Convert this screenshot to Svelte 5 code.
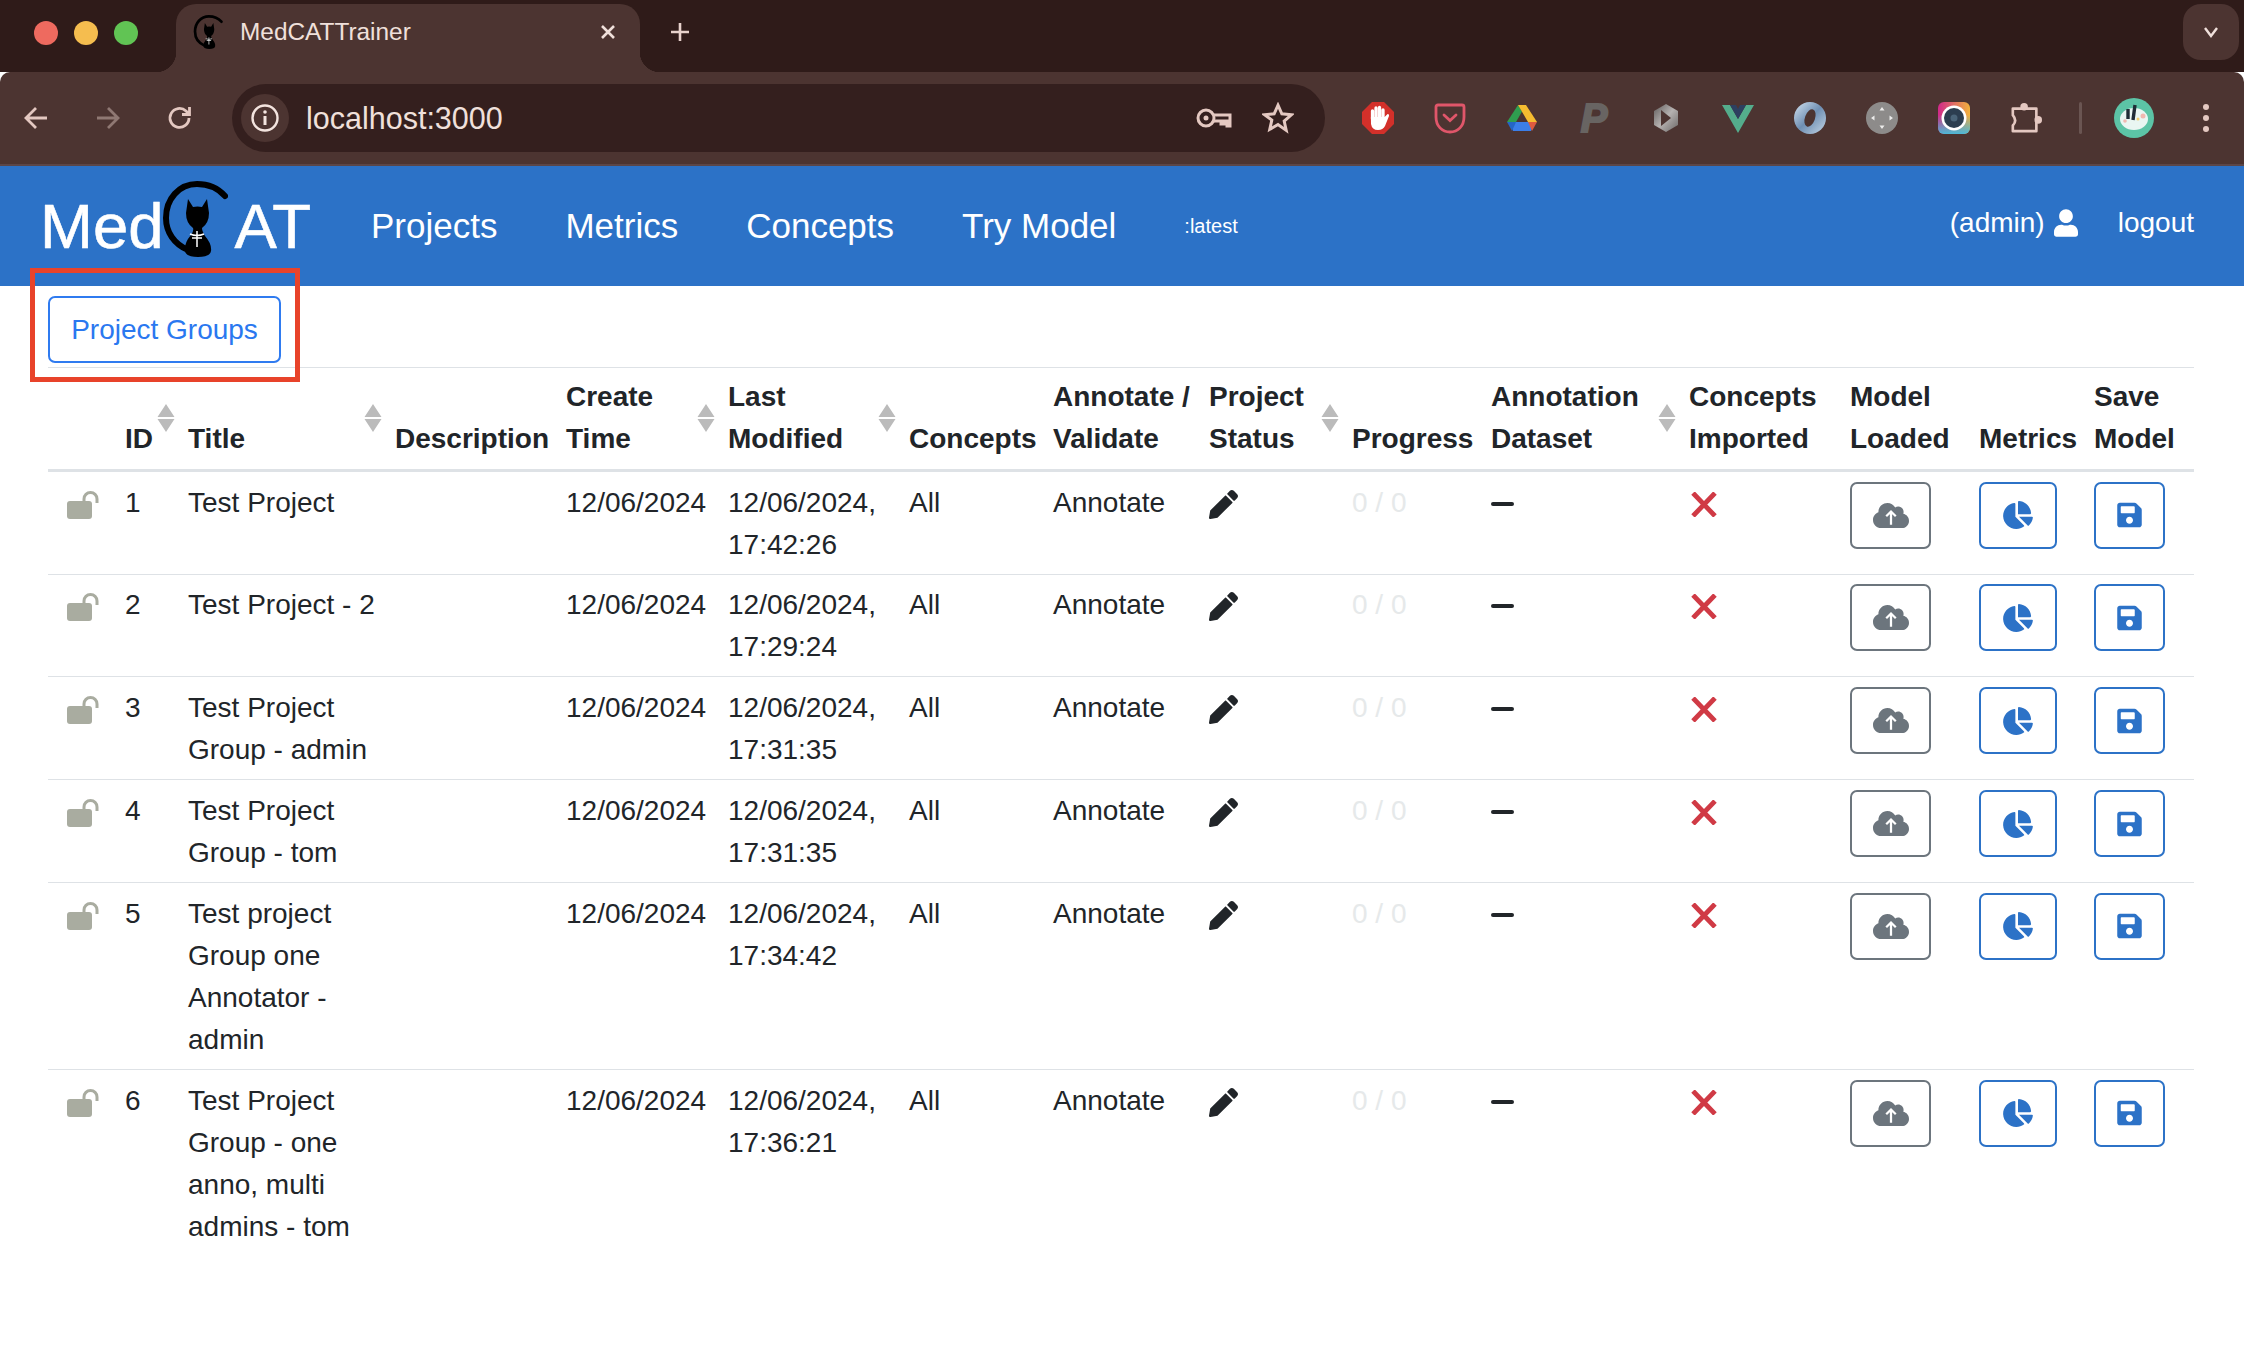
<script>
	const extensions = ['block', 'pocket', 'drive', 'p', 'plex', 'vue', 'ring', 'dpad', 'cam', 'puzzle'];

	const columns = [
		{ label: '' },
		{ label: 'ID', sort: true },
		{ label: 'Title', sort: true },
		{ label: 'Description' },
		{ label: 'Create Time', sort: true },
		{ label: 'Last Modified', sort: true },
		{ label: 'Concepts' },
		{ label: 'Annotate / Validate' },
		{ label: 'Project Status', sort: true },
		{ label: 'Progress' },
		{ label: 'Annotation Dataset', sort: true },
		{ label: 'Concepts Imported' },
		{ label: 'Model Loaded' },
		{ label: 'Metrics' },
		{ label: 'Save Model' }
	];
	const widths = [68, 63, 207, 171, 162, 181, 144, 156, 143, 139, 198, 161, 129, 115, 109];

	const projects = [
		{ id: 1, title: 'Test Project', modified: '17:42:26' },
		{ id: 2, title: 'Test Project - 2', modified: '17:29:24' },
		{ id: 3, title: 'Test Project Group - admin', modified: '17:31:35' },
		{ id: 4, title: 'Test Project Group - tom', modified: '17:31:35' },
		{ id: 5, title: 'Test project Group one Annotator - admin', modified: '17:34:42' },
		{ id: 6, title: 'Test Project Group - one anno, multi admins - tom', modified: '17:36:21' }
	];
</script>

{#snippet cat(cls)}
	<svg class={cls} viewBox="0 0 66 76">
		<path d="M63 15C55 6 44 3 35 3 17 3 4 18 4 37c0 14 8 26 22 32" fill="none" stroke="#000" stroke-width="6" stroke-linecap="round" />
		<path d="M26 18l5 8q4.500-1 9 0l5-8 2 14q0 10-7 15 0 3 3 8 7 8 6 15-1 6-13 6t-13-6q-1-8 6-16 3-4 2-7-7-5-7-15z" fill="#000" />
		<path d="M28 53q7 3 14 0M30 57h10M35 50v16" fill="none" stroke="#fff" stroke-width="1.500" />
	</svg>
{/snippet}

{#snippet extension(name)}
	{#if name === 'block'}
		<svg class="ext" viewBox="0 0 32 32">
			<path d="M10 0h12l10 10v12L22 32H10L0 22V10z" fill="#d3302a" />
			<path d="M10.500 17V9M14 15V6M17.500 15V5.500M21 16V8" stroke="#fff" stroke-width="3.300" stroke-linecap="round" />
			<path d="M8.900 15h13.700l3-3q2 0 1.400 2L23 24q-2 4-7 4-6 0-7-6z" fill="#fff" />
		</svg>
	{:else if name === 'pocket'}
		<svg class="ext" viewBox="0 0 32 32">
			<path d="M4 3h24q2 0 2 2v10c0 9-6 15-14 15S2 24 2 15V5q0-2 2-2z" fill="none" stroke="#e0566a" stroke-width="2.800" />
			<path d="M10 13l6 5.500 6-5.500" fill="none" stroke="#e0566a" stroke-width="2.800" stroke-linecap="round" />
		</svg>
	{:else if name === 'drive'}
		<svg class="ext" viewBox="0 0 32 32">
			<path d="M12 3l4 6.500L10 20H1z" fill="#2f9e4f" />
			<path d="M12 3h8l11 17h-9z" fill="#f5bc30" />
			<path d="M7 20h18l3 1-3 8H7l-2-8z" fill="#3b7ee8" />
			<path d="M1 20h9l-4 9z" fill="#2566c5" />
			<path d="M22 20h9l-5 9z" fill="#dd5a40" />
		</svg>
	{:else if name === 'p'}
		<span class="ext-p">P</span>
	{:else if name === 'plex'}
		<svg class="ext" viewBox="0 0 32 32">
			<defs>
				<linearGradient id="plexFill" x1="0" y1="0" x2="1" y2="1">
					<stop offset="0" stop-color="#5f5b5a" />
					<stop offset="0.500" stop-color="#b5b1b0" />
					<stop offset="1" stop-color="#6a6665" />
				</linearGradient>
			</defs>
			<path d="M16 2l12 7v14l-12 7-12-7V9z" fill="url(#plexFill)" />
			<path d="M11 8l10 8-10 8z" fill="#4c3431" />
		</svg>
	{:else if name === 'vue'}
		<svg class="ext" viewBox="0 0 32 32">
			<path d="M0 3h8l8 14 8-14h8L16 31z" fill="#54ad8c" />
			<path d="M8 3h6l2 4 2-4h6l-8 14z" fill="#2d4060" />
		</svg>
	{:else if name === 'ring'}
		<svg class="ext" viewBox="0 0 32 32">
			<defs>
				<linearGradient id="ringFill" x1="0" y1="0" x2="1" y2="1">
					<stop offset="0" stop-color="#d5e4f2" />
					<stop offset="0.500" stop-color="#6f8fb3" />
					<stop offset="1" stop-color="#c4d6e6" />
				</linearGradient>
			</defs>
			<circle cx="16" cy="16" r="16" fill="url(#ringFill)" />
			<ellipse cx="16" cy="16" rx="5" ry="9" transform="rotate(20 16 16)" fill="#4c3431" />
		</svg>
	{:else if name === 'dpad'}
		<svg class="ext" viewBox="0 0 32 32">
			<circle cx="16" cy="16" r="16" fill="#8d8b8a" />
			<path d="M16 5l2.500 3.500h-5zM16 27l-2.500-3.500h5zM5 16l3.500-2.500v5zM27 16l-3.500 2.500v-5z" fill="#ecebea" />
		</svg>
	{:else if name === 'cam'}
		<svg class="ext" viewBox="0 0 32 32">
			<defs>
				<linearGradient id="camTop" x1="0" y1="0" x2="1" y2="0">
					<stop offset="0" stop-color="#d0288a" />
					<stop offset="1" stop-color="#f2b33c" />
				</linearGradient>
				<linearGradient id="camBottom" x1="0" y1="0" x2="0" y2="1">
					<stop offset="0.400" stop-color="#3fb8d8" stop-opacity="0" />
					<stop offset="1" stop-color="#4db8d8" />
				</linearGradient>
			</defs>
			<rect width="32" height="32" rx="6" fill="url(#camTop)" />
			<rect width="32" height="32" rx="6" fill="url(#camBottom)" />
			<circle cx="16" cy="16" r="12.500" fill="#fff" />
			<circle cx="16" cy="16" r="10" fill="#2c3e50" />
			<circle cx="16" cy="16" r="3.500" fill="#4a6478" />
		</svg>
	{:else if name === 'puzzle'}
		<svg class="ext" viewBox="0 0 34 32">
			<path d="M3 6h25v24H3v-6q5-5 0-11z" fill="none" stroke="#e4c8c1" stroke-width="2.800" stroke-linejoin="round" />
			<circle cx="15" cy="4" r="4" fill="#e4c8c1" />
			<circle cx="30" cy="18" r="4" fill="#e4c8c1" />
		</svg>
	{/if}
{/snippet}

<div class="tabstrip">
	<div class="lights">
		<span class="red"></span>
		<span class="yellow"></span>
		<span class="green"></span>
	</div>
	<div class="tab">
		{@render cat('favicon')}
		<span class="tab-title">MedCATTrainer</span>
		<svg class="tab-close" viewBox="0 0 16 16"><path d="M2 2l12 12M14 2L2 14" stroke="#f0e0db" stroke-width="2.600" /></svg>
	</div>
	<svg class="new-tab" viewBox="0 0 20 20"><path d="M10 1v18M1 10h18" stroke="#e8d2cc" stroke-width="2.600" /></svg>
	<div class="tab-menu">
		<svg viewBox="0 0 16 12"><path d="M2 2l6 8 6-8" fill="none" stroke="#f0e0db" stroke-width="2.400" /></svg>
	</div>
</div>

<div class="toolbar">
	<div class="tool">
		<svg viewBox="0 0 26 26"><path d="M24 13H3M13 3L3 13l10 10" fill="none" stroke="#e4c8c1" stroke-width="2.800" /></svg>
	</div>
	<div class="tool">
		<svg viewBox="0 0 26 26"><path d="M2 13h21M13 3l10 10-10 10" fill="none" stroke="#8f7873" stroke-width="2.800" /></svg>
	</div>
	<div class="tool">
		<svg viewBox="0 0 26 26"><path d="M22 13a9.500 9.500 0 1 1-3-7l3 3M22.500 2v7.500H15" fill="none" stroke="#e4c8c1" stroke-width="2.800" /></svg>
	</div>
	<div class="address">
		<span class="info">
			<svg viewBox="0 0 28 28">
				<circle cx="14" cy="14" r="12.500" fill="none" stroke="#f3e4df" stroke-width="2.400" />
				<path d="M14 12v9" stroke="#f3e4df" stroke-width="3" />
				<circle cx="14" cy="8" r="1.800" fill="#f3e4df" />
			</svg>
		</span>
		<span class="url">localhost:3000</span>
		<span class="addr-icon key">
			<svg viewBox="0 0 36 22">
				<circle cx="10" cy="11" r="8" fill="none" stroke="#e4c8c1" stroke-width="3" />
				<circle cx="10" cy="11" r="2.500" fill="#e4c8c1" />
				<path d="M18 8h16v11h-3v-5h-3v3h-3v-3h-7" fill="none" stroke="#e4c8c1" stroke-width="3" />
			</svg>
		</span>
		<span class="addr-icon">
			<svg viewBox="0 0 30 30"><path d="M15 3l3.600 8.100 8.900.9-6.700 5.900 1.900 8.700L15 21.100l-7.700 4.500 1.900-8.700L2.500 12l8.900-.9z" fill="none" stroke="#e4c8c1" stroke-width="2.800" /></svg>
		</span>
	</div>
	<div class="extensions">
		{#each extensions as name}
			<div class="slot">{@render extension(name)}</div>
		{/each}
	</div>
	<span class="divider"></span>
	<div class="avatar-slot">
		<svg viewBox="0 0 40 40">
			<circle cx="20" cy="20" r="20" fill="#5cc4a6" />
			<ellipse cx="20" cy="21" rx="14" ry="11" fill="#e9f6f2" />
			<path d="M14 11v10M21 7l-2 15" stroke="#1f2c36" stroke-width="3.400" />
			<circle cx="29" cy="18" r="2.500" fill="#f0b8b0" />
			<circle cx="24" cy="21" r="1.500" fill="#f2d070" />
			<circle cx="11" cy="23" r="1.800" fill="#f0b8b0" />
		</svg>
	</div>
	<div class="dots"><span></span><span></span><span></span></div>
</div>

<header class="navbar">
	<div class="logo">
		<span>Med</span>
		{@render cat('logo-cat')}
		<span class="logo-end">AT</span>
	</div>
	<nav>
		<a href="#projects">Projects</a>
		<a href="#metrics">Metrics</a>
		<a href="#concepts">Concepts</a>
		<a href="#model">Try Model</a>
		<span class="version">:latest</span>
	</nav>
	<div class="account">
		<span>(admin)</span>
		<svg class="user" viewBox="0 0 448 512"><path d="M224 256c70.700 0 128-57.300 128-128S294.700 0 224 0 96 57.300 96 128s57.300 128 128 128zm89.600 32h-16.700c-22.200 10.200-46.900 16-72.900 16s-50.600-5.800-72.900-16h-16.700C60.200 288 0 348.200 0 422.400V464c0 26.500 21.500 48 48 48h352c26.500 0 48-21.500 48-48v-41.600c0-74.200-60.200-134.400-134.400-134.400z" fill="#fff" /></svg>
		<span class="logout">logout</span>
	</div>
</header>

<main>
	<button class="groups">Project Groups</button>
	<!-- annotation drawn over the screenshot -->
	<div class="callout"></div>

	<table>
		<colgroup>
			{#each widths as w}
				<col style="width: {w}px" />
			{/each}
		</colgroup>
		<thead>
			<tr>
				{#each columns as col}
					<th>
						{col.label}
						{#if col.sort}
							<svg class="sort" viewBox="0 0 18 28">
								<path d="M9 0l8.500 13H.5zM9 28L.5 15h17z" fill="#bbb" />
							</svg>
						{/if}
					</th>
				{/each}
			</tr>
		</thead>
		<tbody>
			{#each projects as p}
				<tr>
					<td>
						<svg class="lock" viewBox="0 0 32 28">
							<rect y="10" width="25" height="18" rx="3" fill="#a9aca0" />
							<path d="M17 11V8a6.500 6.500 0 0 1 13 0v4" fill="none" stroke="#a9aca0" stroke-width="3" />
						</svg>
					</td>
					<td>{p.id}</td>
					<td>{p.title}</td>
					<td></td>
					<td>12/06/2024</td>
					<td>12/06/2024, {p.modified}</td>
					<td>All</td>
					<td>Annotate</td>
					<td>
						<svg class="pencil" viewBox="0 0 512 512"><path d="M497.900 142.100l-46.100 46.100c-4.700 4.700-12.300 4.700-17 0l-111-111c-4.700-4.700-4.700-12.300 0-17l46.100-46.100c18.700-18.700 49.100-18.700 67.900 0l60.100 60.100c18.800 18.700 18.800 49.100 0 67.900zM284.200 99.800L21.600 362.400.4 483.900c-2.900 16.400 11.400 30.600 27.800 27.800l121.500-21.300 262.600-262.600c4.700-4.700 4.700-12.300 0-17l-111-111c-4.800-4.700-12.400-4.700-17.100 0z" fill="#212529" /></svg>
					</td>
					<td class="progress">0 / 0</td>
					<td><span class="dash"></span></td>
					<td>
						<svg class="cross" viewBox="0 0 26 25"><path d="M2 1l22 23M24 1L2 24" stroke="#d03a45" stroke-width="4.800" /></svg>
					</td>
					<td>
						<button class="icon-btn load">
							<svg width="36" height="29" viewBox="0 0 640 512">
								<path d="M537.600 226.600c4.100-10.700 6.400-22.400 6.400-34.600 0-53-43-96-96-96-19.700 0-38.100 6-53.300 16.200C367 64.200 315.300 32 256 32c-88.400 0-160 71.600-160 160 0 2.700.1 5.400.2 8.100C40.200 219.800 0 273.200 0 336c0 79.500 64.500 144 144 144h368c70.700 0 128-57.300 128-128 0-61.900-44-113.600-102.400-125.400z" fill="#6c757d" />
								<path d="M320 420V190M235 270l85-85 85 85" fill="none" stroke="#fff" stroke-width="40" />
							</svg>
						</button>
					</td>
					<td>
						<button class="icon-btn primary metrics">
							<svg width="30" height="28" viewBox="0 0 544 512"><path d="M527.790 288H290.500l158.030 158.030c6.040 6.040 15.980 6.530 22.190.68 38.700-36.460 65.320-85.610 73.130-140.860 1.340-9.460-6.510-17.850-16.060-17.850zm-15.830-64.800C503.720 103.740 408.260 8.280 288.800.04 279.680-.59 272 7.100 272 16.240V240h223.770c9.140 0 16.820-7.680 16.190-16.800zM224 288V50.710c0-9.550-8.390-17.400-17.840-16.060C86.990 51.490-4.100 155.600.14 280.370 4.500 408.510 114.830 513.590 243.030 511.980c50.400-.63 96.970-16.870 135.260-44.030 7.900-5.600 8.420-17.230 1.570-24.080L224 288z" fill="#2c72c7" /></svg>
						</button>
					</td>
					<td>
						<button class="icon-btn primary save">
							<svg width="25" height="28" viewBox="0 0 448 512"><path d="M433.941 129.941l-83.882-83.882A48 48 0 0 0 316.118 32H48C21.490 32 0 53.490 0 80v352c0 26.510 21.490 48 48 48h352c26.510 0 48-21.490 48-48V163.882a48 48 0 0 0-14.059-33.941zM224 416c-35.346 0-64-28.654-64-64 0-35.346 28.654-64 64-64s64 28.654 64 64c0 35.346-28.654 64-64 64zm96-304.520V212c0 6.627-5.373 12-12 12H76c-6.627 0-12-5.373-12-12V108c0-6.627 5.373-12 12-12h228.520c3.183 0 6.235 1.264 8.485 3.515l3.480 3.480A11.996 11.996 0 0 1 320 111.480z" fill="#2c72c7" /></svg>
						</button>
					</td>
				</tr>
			{/each}
		</tbody>
	</table>
</main>

<style>
	:global(body) {
		background: #fff;
		font-family: 'Liberation Sans', Arial, sans-serif;
		color: #212529;
	}

	/* browser chrome */
	.tabstrip {
		height: 72px;
		background: #2f1b19;
		display: flex;
		align-items: center;
	}
	.lights {
		display: flex;
		gap: 16px;
		margin-left: 34px;
		margin-bottom: 6px;
	}
	.lights span {
		width: 24px;
		height: 24px;
		border-radius: 50%;
	}
	.red {
		background: #ee6a5f;
	}
	.yellow {
		background: #f5bd4f;
	}
	.green {
		background: #61c454;
	}
	.tab {
		position: relative;
		align-self: flex-end;
		height: 68px;
		width: 464px;
		margin-left: 38px;
		background: #4c3431;
		border-radius: 20px 20px 0 0;
		display: flex;
		align-items: center;
		padding: 0 24px 12px 17px;
		box-sizing: border-box;
	}
	.tab::before,
	.tab::after {
		content: '';
		position: absolute;
		bottom: 0;
		width: 20px;
		height: 20px;
	}
	.tab::before {
		left: -20px;
		background: radial-gradient(circle at 0 0, transparent 20px, #4c3431 20.5px);
	}
	.tab::after {
		right: -20px;
		background: radial-gradient(circle at 100% 0, transparent 20px, #4c3431 20.5px);
	}
	.favicon {
		width: 30px;
		height: 34px;
	}
	.tab-title {
		margin-left: 17px;
		font-size: 24.400px;
		color: #f0e0db;
	}
	.tab-close {
		width: 16px;
		height: 16px;
		margin-left: auto;
	}
	.new-tab {
		width: 20px;
		height: 20px;
		margin-left: 30px;
		margin-bottom: 8px;
	}
	.tab-menu {
		margin-left: auto;
		margin-right: 5px;
		margin-top: -8px;
		width: 56px;
		height: 56px;
		border-radius: 18px;
		background: #4c3431;
		display: flex;
		align-items: center;
		justify-content: center;
	}
	.tab-menu svg {
		width: 16px;
		height: 12px;
	}
	.toolbar {
		height: 92px;
		background: #4c3431;
		border-bottom: 2px solid #5b4648;
		border-radius: 10px 10px 0 0;
		display: flex;
		align-items: center;
	}
	.tool {
		width: 72px;
		display: flex;
		justify-content: center;
	}
	.tool svg {
		width: 26px;
		height: 26px;
	}
	.address {
		width: 1093px;
		height: 68px;
		margin-left: 16px;
		border-radius: 34px;
		background: #341f1e;
		display: flex;
		align-items: center;
		padding: 0 15px 0 9px;
		box-sizing: border-box;
	}
	.info {
		width: 48px;
		height: 48px;
		border-radius: 50%;
		background: #4c3431;
		display: flex;
		align-items: center;
		justify-content: center;
	}
	.info svg {
		width: 28px;
		height: 28px;
	}
	.url {
		margin-left: 17px;
		font-size: 30.500px;
		color: #f0e0db;
	}
	.addr-icon {
		width: 64px;
		display: flex;
		justify-content: center;
	}
	.addr-icon svg {
		width: 32px;
		height: 32px;
	}
	.addr-icon.key {
		margin-left: auto;
	}
	.addr-icon.key svg {
		width: 36px;
		height: 22px;
	}
	.extensions {
		display: flex;
		margin-left: 17px;
	}
	.slot {
		width: 72px;
		height: 32px;
		display: flex;
		justify-content: center;
		align-items: center;
	}
	.ext {
		width: 32px;
		height: 32px;
	}
	.ext-p {
		font-size: 40px;
		line-height: 32px;
		font-weight: bold;
		font-style: italic;
		color: #686462;
		-webkit-text-stroke: 2px #686462;
	}
	.divider {
		width: 3px;
		height: 32px;
		margin-left: 17px;
		border-radius: 2px;
		background: #6a5552;
	}
	.avatar-slot {
		width: 104px;
		display: flex;
		justify-content: center;
	}
	.avatar-slot svg {
		width: 40px;
		height: 40px;
	}
	.dots {
		width: 40px;
		display: flex;
		flex-direction: column;
		align-items: center;
		gap: 5px;
	}
	.dots span {
		width: 6px;
		height: 6px;
		border-radius: 50%;
		background: #e4c8c1;
	}

	/* app navbar */
	.navbar {
		height: 120px;
		background: #2c72c7;
		color: #fff;
		display: flex;
		align-items: center;
		padding-left: 40px;
		padding-right: 50px;
	}
	.logo {
		display: flex;
		align-items: center;
		font-size: 63.500px;
		-webkit-text-stroke: 0.6px #fff;
	}
	.logo-cat {
		width: 66px;
		height: 76px;
		margin: 0 7px 14px -2px;
	}
	nav {
		display: flex;
		align-items: center;
		gap: 68px;
		margin-left: 60px;
		font-size: 35px;
	}
	nav a {
		color: #fff;
		text-decoration: none;
	}
	.version {
		font-size: 20px;
	}
	.account {
		margin-left: auto;
		margin-bottom: 6px;
		display: flex;
		align-items: center;
		font-size: 28px;
	}
	.user {
		width: 24px;
		height: 28px;
		margin-left: 9px;
	}
	.logout {
		margin-left: 40px;
	}

	/* project list */
	main {
		position: relative;
		padding: 10px 50px 0 48px;
	}
	.groups {
		display: block;
		width: 233px;
		height: 67px;
		background: #fff;
		border: 2px solid #2f7bf0;
		border-radius: 7px;
		color: #2a78f0;
		font: 28px 'Liberation Sans', Arial, sans-serif;
	}
	.callout {
		position: absolute;
		left: 30px;
		top: -18px;
		width: 270px;
		height: 114px;
		border: 5px solid #e8432a;
		box-sizing: border-box;
	}
	table {
		width: 2146px;
		margin-top: 4px;
		table-layout: fixed;
		border-collapse: collapse;
		font-size: 28px;
		line-height: 42px;
	}
	th {
		position: relative;
		text-align: left;
		vertical-align: bottom;
		padding: 8.400px 5px 8.400px 9px;
		border-top: 1.750px solid #dee2e6;
		border-bottom: 3.500px solid #dee2e6;
	}
	td {
		vertical-align: top;
		padding: 9.900px 5px 7.900px 9px;
		border-bottom: 1.750px solid #dee2e6;
	}
	tbody tr:last-child td {
		border-bottom: none;
	}
	.sort {
		position: absolute;
		right: 4px;
		top: 50%;
		width: 18px;
		height: 28px;
		transform: translateY(-50%);
	}
	.lock {
		display: block;
		width: 32px;
		height: 28px;
		margin: 9px 0 0 10px;
	}
	.pencil {
		display: block;
		width: 29px;
		height: 29px;
		margin-top: 8px;
	}
	.progress {
		color: #e6e9ea;
	}
	.dash {
		display: block;
		width: 23px;
		height: 4px;
		margin-top: 20px;
		background: #212529;
		border-radius: 2px;
	}
	.cross {
		display: block;
		width: 26px;
		height: 25px;
		margin: 10px 0 0 2px;
	}
	.icon-btn {
		display: flex;
		align-items: center;
		justify-content: center;
		height: 67px;
		padding: 0;
		background: #fff;
		border: 2px solid #6c757d;
		border-radius: 7px;
	}
	.icon-btn.primary {
		border-color: #2c72c7;
	}
	.load {
		width: 81px;
	}
	.metrics {
		width: 78px;
	}
	.save {
		width: 71px;
	}
</style>
